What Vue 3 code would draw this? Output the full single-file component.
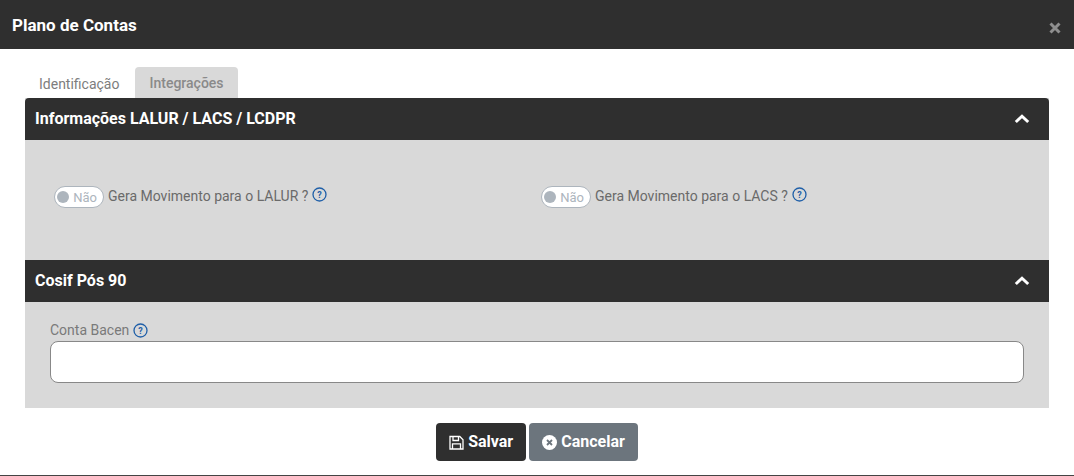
<script setup>
const toggles = [
  { id: 1, label: 'Gera Movimento para o LALUR ?' },
  { id: 2, label: 'Gera Movimento para o LACS ?' }
]
</script>

<template>
  <div class="modal">
    <div class="modal-header">
      <span class="modal-title">Plano de Contas</span>
      <svg class="close" width="12" height="12" viewBox="0 0 12 12">
        <path d="M1.5 1.5 L10.5 10.5 M10.5 1.5 L1.5 10.5" stroke="#8f8f8f" stroke-width="3" fill="none" />
      </svg>
    </div>

    <div class="modal-body">
      <div class="tabs">
        <div class="tab">Identificação</div>
        <div class="tab active">Integrações</div>
      </div>

      <div class="panel">
        <div class="section-header first">
          <span>Informações LALUR / LACS / LCDPR</span>
          <svg width="16" height="10" viewBox="0 0 16 10">
            <path d="M1.8 8 L8 2.2 L14.2 8" stroke="#fff" stroke-width="3" fill="none" />
          </svg>
        </div>
        <div class="section-body toggles">
          <div v-for="t in toggles" :key="t.id" class="toggle-row">
            <div class="switch">
              <span class="knob"></span>
              <span class="switch-text">Não</span>
            </div>
            <span class="toggle-label">{{ t.label }}</span>
            <svg class="help" width="15" height="15" viewBox="0 0 15 15">
              <circle cx="7.5" cy="7.5" r="6.5" stroke="#1f5fa8" stroke-width="1.3" fill="none" />
              <text x="7.5" y="10.6" text-anchor="middle" class="help-mark">?</text>
            </svg>
          </div>
        </div>

        <div class="section-header">
          <span>Cosif Pós 90</span>
          <svg width="16" height="10" viewBox="0 0 16 10">
            <path d="M1.8 8 L8 2.2 L14.2 8" stroke="#fff" stroke-width="3" fill="none" />
          </svg>
        </div>
        <div class="section-body field">
          <label class="field-label">
            Conta Bacen
            <svg class="help" width="15" height="15" viewBox="0 0 15 15">
              <circle cx="7.5" cy="7.5" r="6.5" stroke="#1f5fa8" stroke-width="1.3" fill="none" />
              <text x="7.5" y="10.6" text-anchor="middle" class="help-mark">?</text>
            </svg>
          </label>
          <input class="field-input" type="text" />
        </div>
      </div>

      <div class="actions">
        <button class="btn save">
          <svg width="15" height="15" viewBox="0 0 15 15">
            <path d="M1 1.5 H10.8 L14 4.7 V14 H1 Z" stroke="#fff" stroke-width="1.3" fill="none" />
            <path d="M4 1.5 V5.5 H9.5 V1.5 M3.5 14 V8.8 H11.5 V14" stroke="#fff" stroke-width="1.3" fill="none" />
          </svg>
          Salvar
        </button>
        <button class="btn cancel">
          <svg width="15" height="15" viewBox="0 0 15 15">
            <circle cx="7.5" cy="7.5" r="7.5" fill="#fff" />
            <path d="M5 5 L10 10 M10 5 L5 10" stroke="#6c757d" stroke-width="1.8" fill="none" />
          </svg>
          Cancelar
        </button>
      </div>
    </div>
  </div>
</template>

<style>
html, body {
  margin: 0;
  background: #fff;
}
</style>

<style scoped>
.modal {
  box-sizing: border-box;
  width: 1074px;
  height: 476px;
  font-family: Roboto, "Liberation Sans", sans-serif;
  background: #fff;
  border-bottom: 1px solid #444;
  overflow: hidden;
}

.modal-header {
  display: flex;
  align-items: center;
  justify-content: space-between;
  height: 49px;
  padding: 0 13px 0 12px;
  background: #2f2f2f;
}

.modal-title {
  color: #fff;
  font-size: 17px;
  font-weight: 700;
}

.close {
  margin-top: 7px;
}

.modal-body {
  padding: 18px 25px 0;
}

.tabs {
  display: flex;
  height: 31px;
}

.tab {
  box-sizing: border-box;
  padding: 9px 14px 0;
  font-size: 14px;
  line-height: 17px;
  color: #7d7d7d;
}

.tab.active {
  margin-left: 2px;
  padding: 8px 14px 0;
  background: #d9d9d9;
  border-radius: 4px 4px 0 0;
  color: #8a8a8a;
  font-weight: 500;
}

.panel {
  background: #d9d9d9;
}

.section-header {
  display: flex;
  align-items: center;
  justify-content: space-between;
  box-sizing: border-box;
  height: 42px;
  padding: 0 19px 2px 10px;
  background: #2f2f2f;
  color: #fff;
  font-size: 16px;
  font-weight: 700;
}

.section-header svg {
  margin-top: 2px;
}

.section-header.first {
  border-radius: 4px 4px 0 0;
}

.toggles {
  display: flex;
  height: 120px;
  box-sizing: border-box;
  padding: 46px 29px 0;
}

.toggle-row {
  display: flex;
  flex: none;
  align-items: flex-start;
  width: 487px;
  height: 24px;
}

.switch {
  box-sizing: border-box;
  display: flex;
  align-items: center;
  justify-content: space-between;
  width: 50px;
  height: 22px;
  padding: 0 6px 0 2px;
  background: #fff;
  border: 1px solid #adb5bd;
  border-radius: 11px;
}

.knob {
  width: 12px;
  height: 12px;
  border-radius: 50%;
  background: #adb5bd;
}

.switch-text {
  font-size: 13px;
  padding-top: 1px;
  color: #adb5bd;
}

.toggle-label {
  margin-left: 4px;
  font-size: 14px;
  line-height: 21px;
  color: #6a6a6a;
}

.help {
  flex: none;
}

.toggle-row .help {
  margin-left: 4px;
  margin-top: 1px;
}

.help-mark {
  font-family: Roboto, sans-serif;
  font-size: 9px;
  font-weight: 700;
  fill: #1f5fa8;
}

.field {
  box-sizing: border-box;
  height: 106px;
  padding: 19px 25px 0;
}

.field-label {
  display: flex;
  align-items: center;
  gap: 4px;
  height: 18px;
  font-size: 14px;
  color: #7a7a7a;
}

.field-input {
  display: block;
  box-sizing: border-box;
  width: 974px;
  height: 42px;
  margin-top: 2px;
  background: #fff;
  border: 1px solid #888;
  border-radius: 8px;
  outline: none;
}

.actions {
  display: flex;
  justify-content: center;
  gap: 3px;
  margin-top: 15px;
}

.btn {
  display: flex;
  align-items: center;
  gap: 4px;
  height: 38px;
  padding: 0 13px 1px;
  border: none;
  border-radius: 4px;
  color: #fff;
  font-family: Roboto, sans-serif;
  font-size: 16px;
  font-weight: 700;
}

.btn svg {
  margin-top: 1px;
}

.save {
  background: #2f2f2f;
}

.cancel {
  background: #6c757d;
}
</style>
